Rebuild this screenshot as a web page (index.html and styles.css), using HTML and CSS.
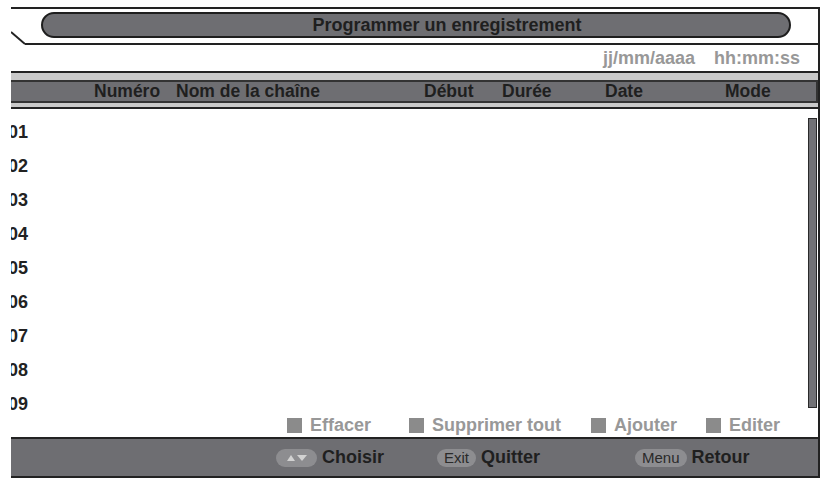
FILE: index.html
```html
<!DOCTYPE html>
<html lang="fr">
<head>
<meta charset="utf-8">
<title>Programmer un enregistrement</title>
<link rel="stylesheet" href="styles.css">
</head>
<body>
<div class="screen">
  <div class="title-row">
    <svg class="corner" width="14" height="36" viewBox="0 0 14 36"><path d="M0 23 L14 35" stroke="#222" stroke-width="2" fill="none"/></svg>
    <div class="title-main">
      <div class="title-pill">Programmer un enregistrement</div>
    </div>
  </div>
  <div class="date-row">
    <span>jj/mm/aaaa</span>
    <span>hh:mm:ss</span>
  </div>
  <div class="header-band">
    <div class="header-bar">
      <span>Numéro</span>
      <span>Nom de la chaîne</span>
      <span>Début</span>
      <span>Durée</span>
      <span>Date</span>
      <span>Mode</span>
    </div>
  </div>
  <div class="list-area">
    <ol class="rows">
      <li>01</li>
      <li>02</li>
      <li>03</li>
      <li>04</li>
      <li>05</li>
      <li>06</li>
      <li>07</li>
      <li>08</li>
      <li>09</li>
    </ol>
    <div class="scrollbar"></div>
  </div>
  <div class="legend">
    <div class="legend-item w1"><span class="sq"></span>Effacer</div>
    <div class="legend-item w2"><span class="sq"></span>Supprimer tout</div>
    <div class="legend-item w3"><span class="sq"></span>Ajouter</div>
    <div class="legend-item"><span class="sq"></span>Editer</div>
  </div>
  <div class="footer">
    <div class="foot-item f1"><span class="key key-arrows"><svg width="22" height="8" viewBox="0 0 22 8"><path d="M1 7 L5 1 L9 7 Z" fill="#d2d2d2"/><path d="M11 1 L21 1 L16 7 Z" fill="#d2d2d2"/></svg></span>Choisir</div>
    <div class="foot-item f2"><span class="key">Exit</span>Quitter</div>
    <div class="foot-item"><span class="key">Menu</span>Retour</div>
  </div>
</div>
</body>
</html>
```

FILE: styles.css
```css
html, body {
  margin: 0;
  padding: 0;
  background: #ffffff;
}

body {
  font-family: "Liberation Sans", Arial, sans-serif;
  font-weight: bold;
  font-size: 18px;
  color: #222222;
}

.screen {
  margin: 7px 0 0 11px;
  width: 809px;
  box-sizing: border-box;
  border-top: 2px solid #222222;
  border-right: 2px solid #222222;
  overflow: hidden;
}

.title-row {
  display: flex;
  height: 36px;
}

.corner {
  flex: none;
  display: block;
}

.title-main {
  flex: 1;
  border-bottom: 2px solid #222222;
  padding: 3px 27px 0 16px;
}

.title-pill {
  height: 22px;
  line-height: 22px;
  border: 2px solid #1e1e1e;
  border-radius: 14px;
  background: #6e6e72;
  text-align: center;
  padding-left: 62px;
  color: #1f1f1f;
}

.date-row {
  height: 26px;
  line-height: 27px;
  border-bottom: 2px solid #222222;
  display: flex;
  justify-content: flex-end;
  gap: 19px;
  padding-right: 18px;
  color: #989898;
}

.header-band {
  background: #c9c9c9;
  border-bottom: 2px solid #222222;
  padding: 7px 0 4px 0;
}

.header-bar {
  height: 19px;
  line-height: 19px;
  font-size: 17.5px;
  background: #6e6e72;
  border-top: 2px solid #333333;
  border-bottom: 2px solid #333333;
  border-right: 2px solid #333333;
  display: grid;
  grid-template-columns: 82px 248px 78px 103px 120px 1fr;
  padding-left: 83px;
  color: #1f1f1f;
}

.list-area {
  display: flex;
  align-items: flex-start;
}

.rows {
  flex: 1;
  list-style: none;
  margin: 0;
  padding: 12px 0 0 0;
  display: flex;
  flex-direction: column;
  gap: 12px;
}

.rows li {
  line-height: 22px;
  margin-left: -3px;
}

.scrollbar {
  flex: none;
  width: 7px;
  height: 288px;
  margin: 9px 1px 0 0;
  border: 1.5px solid #2a2a2a;
  background: #727276;
}

.legend {
  display: flex;
  align-items: center;
  height: 20px;
  padding-left: 276px;
  color: #989898;
}

.legend-item {
  display: flex;
  align-items: center;
  gap: 8px;
}

.legend-item.w1 { width: 122px; }
.legend-item.w2 { width: 182px; }
.legend-item.w3 { width: 115px; }

.sq {
  width: 15px;
  height: 15px;
  background: #8b8b8b;
  margin-top: 1px;
}

.footer {
  margin-top: 2px;
  border-top: 2px solid #222222;
  border-bottom: 2px solid #222222;
  background: #6e6e72;
  height: 37px;
  display: flex;
  align-items: center;
  padding-left: 265px;
  color: #1f1f1f;
}

.foot-item {
  display: flex;
  align-items: center;
  gap: 5px;
}

.foot-item.f1 { width: 161px; }
.foot-item.f2 { width: 198px; }

.key {
  display: inline-flex;
  align-items: center;
  justify-content: center;
  height: 18px;
  padding: 0 7px;
  border-radius: 9px;
  background: #8d8d90;
  font-weight: normal;
  font-size: 15px;
  color: #2a2a2a;
}

.key-arrows {
  width: 27px;
}

.key-arrows svg {
  display: block;
}
```
